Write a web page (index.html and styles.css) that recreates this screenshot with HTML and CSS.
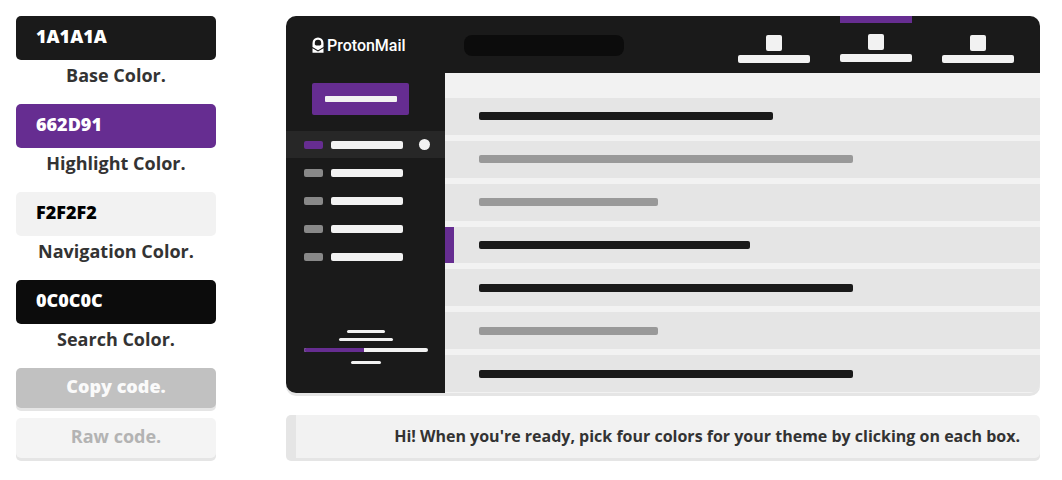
FILE: index.html
```html
<!DOCTYPE html>
<html lang="en">
<head>
<meta charset="utf-8">
<meta name="viewport" content="width=device-width, initial-scale=1">
<title>ProtonMail theme</title>
<link rel="stylesheet" href="styles.css">
</head>
<body>
<div class="page">
  <form class="controls">
    <div class="field">
      <input class="swatch swatch-base" id="base" type="text" value="1A1A1A">
      <label class="field-label" for="base">Base Color.</label>
    </div>
    <div class="field">
      <input class="swatch swatch-highlight" id="highlight" type="text" value="662D91">
      <label class="field-label" for="highlight">Highlight Color.</label>
    </div>
    <div class="field">
      <input class="swatch swatch-navigation" id="navigation" type="text" value="F2F2F2">
      <label class="field-label" for="navigation">Navigation Color.</label>
    </div>
    <div class="field">
      <input class="swatch swatch-search" id="search" type="text" value="0C0C0C">
      <label class="field-label" for="search">Search Color.</label>
    </div>
    <div class="actions">
      <button class="button button-copy" type="button">Copy code.</button>
      <button class="button button-raw" type="button">Raw code.</button>
    </div>
  </form>
  <main class="preview">
    <section class="mail" aria-label="Theme preview">
      <aside class="sidebar">
        <div class="brand">
          <svg class="brand-icon" viewBox="0 0 12 16" width="12" height="16" aria-hidden="true">
            <path fill="#fff" fill-rule="evenodd" d="M.5 6a5.500 5.500 0 0 1 11 0v4L6 13.200.5 10zM2.800 6v1.500L4 8.500h4l1.200-1V6a3.200 3.200 0 0 0-6.400 0z"/>
            <path fill="#fff" d="M.5 11.200L6 14.400l5.500-3.200v4.600H.5z"/>
          </svg>
          <span>ProtonMail</span>
        </div>
        <div class="compose"><span class="line"></span></div>
        <ul class="folders">
          <li class="folder folder-active"><span class="tag"></span><span class="name"></span><span class="dot"></span></li>
          <li class="folder"><span class="tag"></span><span class="name"></span></li>
          <li class="folder"><span class="tag"></span><span class="name"></span></li>
          <li class="folder"><span class="tag"></span><span class="name"></span></li>
          <li class="folder"><span class="tag"></span><span class="name"></span></li>
        </ul>
        <div class="storage">
          <span class="thin thin-a"></span>
          <span class="thin thin-b"></span>
          <span class="meter"><span class="meter-fill"></span></span>
          <span class="thin thin-c"></span>
        </div>
      </aside>
      <div class="content">
        <header class="topbar">
          <div class="searchbox"></div>
          <div class="tabs">
            <div class="tab"><span class="tab-icon"></span><span class="name"></span></div>
            <div class="tab tab-active"><span class="tab-icon"></span><span class="name"></span></div>
            <div class="tab"><span class="tab-icon"></span><span class="name"></span></div>
          </div>
        </header>
        <ul class="messages">
          <li class="message"><span class="subject medium"></span></li>
          <li class="message read"><span class="subject long"></span></li>
          <li class="message read"><span class="subject short"></span></li>
          <li class="message selected"><span class="subject fair"></span></li>
          <li class="message"><span class="subject long"></span></li>
          <li class="message read"><span class="subject short"></span></li>
          <li class="message"><span class="subject long"></span></li>
        </ul>
      </div>
    </section>
    <p class="notice">Hi! When you're ready, pick four colors for your theme by clicking on each box.</p>
  </main>
</div>
</body>
</html>
```
FILE: styles.css
```css
* { box-sizing: border-box; }

body {
  margin: 0;
  background: #fff;
  color: #333;
  font-family: "Open Sans", "Noto Sans", sans-serif;
  font-size: 18px;
  font-weight: 700;
}

ul { margin: 0; padding: 0; list-style: none; }

.page {
  display: grid;
  grid-template-columns: 200px minmax(0, 1fr);
  gap: 70px;
  padding: 16px 22px 16px 16px;
}

.field { display: flex; flex-direction: column; height: 88px; }

.swatch {
  width: 100%;
  height: 44px;
  padding: 0 20px 4px;
  border: 0;
  border-radius: 5px;
  color: #fff;
  font: inherit;
  font-weight: 800;
}

.swatch-base { background: #1a1a1a; }
.swatch-highlight { background: #662d91; }
.swatch-navigation { background: #f2f2f2; color: #000; }
.swatch-search { background: #0c0c0c; }

.field-label { line-height: 30px; text-align: center; }

.actions { display: flex; flex-direction: column; gap: 10px; }

.button {
  height: 40px;
  padding: 0 0 4px;
  border: 0;
  border-radius: 5px;
  box-shadow: 0 3px #e5e5e5;
  font: inherit;
}

.button-copy { background: #c1c1c1; color: #fafafa; font-weight: 800; }
.button-raw { background: #f4f4f4; color: #b3b3b3; }

.preview { display: flex; flex-direction: column; gap: 22px; }

.mail {
  display: flex;
  aspect-ratio: 2 / 1;
  border-radius: 10px;
  overflow: hidden;
  background: #f2f2f2;
  box-shadow: 0 3px #e5e5e5;
}

.sidebar {
  display: flex;
  flex-direction: column;
  flex: 0 0 159px;
  background: #1a1a1a;
}

.brand {
  display: flex;
  align-items: center;
  gap: 3px;
  height: 67px;
  padding: 0 0 7px 26px;
  color: #fff;
  font: 500 16px/20px Roboto, sans-serif;
}

.brand-icon { margin-bottom: 2px; }

.compose {
  display: flex;
  align-items: center;
  justify-content: center;
  height: 32px;
  margin: 0 36px 16px 26px;
  border-radius: 2px;
  background: #662d91;
}

.line { width: 72px; height: 6px; border-radius: 1px; background: #f2f2f2; }

.folders { display: grid; gap: 1px; }

.folder {
  display: flex;
  align-items: center;
  gap: 8px;
  height: 27px;
  padding: 0 15px 0 18px;
}

.folder-active { background: #272727; }
.folder-active .tag { background: #662d91; }

.tag { width: 19px; height: 8px; border-radius: 2px; background: #888; }
.name { width: 72px; height: 8px; border-radius: 2px; background: #f2f2f2; }
.dot { width: 11px; height: 11px; margin-left: auto; border-radius: 50%; background: #f2f2f2; }

.storage {
  display: flex;
  flex-direction: column;
  align-items: center;
  gap: 5px;
  margin-top: auto;
  padding: 0 17px 29px 18px;
}

.thin { height: 3px; border-radius: 2px; background: #f2f2f2; }
.thin-a { width: 38px; }
.thin-b { width: 54px; }
.thin-c { width: 30px; margin-top: 4px; }

.meter { align-self: stretch; height: 4px; margin-top: 2px; border-radius: 2px; overflow: hidden; background: #f2f2f2; }
.meter-fill { display: block; width: 48%; height: 100%; background: #662d91; }

.content { display: flex; flex-direction: column; flex: 1; min-width: 0; }

.topbar {
  display: flex;
  justify-content: space-between;
  gap: 20px;
  height: 57px;
  padding: 0 26px 0 19px;
  background: #1a1a1a;
}

.searchbox { width: 160px; height: 21px; margin-top: 19px; border-radius: 8px; background: #0c0c0c; }

.tabs { display: flex; gap: 30px; }

.tab {
  display: flex;
  flex-direction: column;
  align-items: center;
  gap: 4px;
  width: 72px;
  padding-top: 19px;
}

.tab-active { padding-top: 11px; border-top: 7px solid #662d91; }
.tab-icon { width: 16px; height: 16px; border-radius: 2px; background: #f2f2f2; }

.messages {
  display: flex;
  flex-direction: column;
  flex: 1;
  gap: 6px;
  padding: 25px 0 1px;
}

.message {
  display: flex;
  align-items: center;
  flex: 1;
  padding-left: 34px;
  background: #e5e5e5;
}

.selected { padding-left: 25px; border-left: 9px solid #662d91; }

.subject { height: 8px; border-radius: 2px; background: #1a1a1a; }
.read .subject { background: #999; }
.short { width: 179px; }
.fair { width: 271px; }
.medium { width: 294px; }
.long { width: 374px; }

.notice {
  margin: 0;
  padding: 6px 20px 7px;
  border-left: 10px solid #e5e5e5;
  border-radius: 5px;
  background: #f2f2f2;
  box-shadow: 0 3px #e5e5e5;
  font-size: 16px;
  line-height: 30px;
  text-align: right;
}
```
